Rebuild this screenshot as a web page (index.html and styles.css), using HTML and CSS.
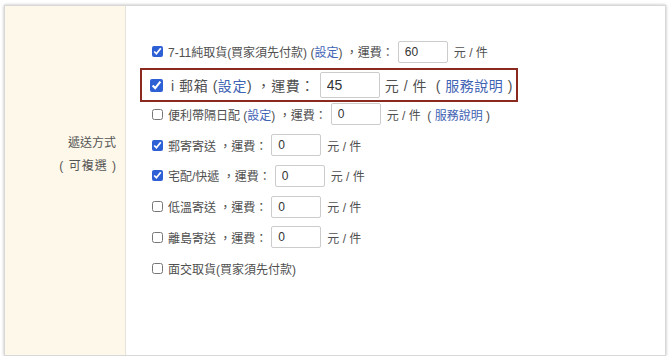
FILE: index.html
```html
<!DOCTYPE html>
<html lang="zh-Hant">
<head>
<meta charset="utf-8">
<link rel="stylesheet" href="styles.css">
</head>
<body>
<div class="frame">
  <div class="label-col">
    <div class="label-line">遞送方式</div>
    <div class="label-line">( 可複選 )</div>
  </div>
  <div class="content">
    <div class="row r1">
      <input type="checkbox" class="cb" checked>
      <span class="txt">7-11純取貨(買家須先付款) (<a class="link">設定</a>) ，運費：</span>
      <input type="text" class="fee" value="60">
      <span class="unit">元 / 件</span>
    </div>
    <div class="row big">
      <input type="checkbox" class="cb cb-big" checked>
      <span class="txt">i 郵箱 (<a class="link">設定</a>) ，運費：</span>
      <input type="text" class="fee fee-big" value="45">
      <span class="unit">元 / 件 &nbsp;( <a class="link">服務說明</a> )</span>
    </div>
    <div class="row r3">
      <input type="checkbox" class="cb">
      <span class="txt">便利帶隔日配 (<a class="link">設定</a>) ，運費：</span>
      <input type="text" class="fee" value="0">
      <span class="unit">元 / 件 &nbsp;( <a class="link">服務說明</a> )</span>
    </div>
    <div class="row r4">
      <input type="checkbox" class="cb" checked>
      <span class="txt">郵寄寄送 ，運費：</span>
      <input type="text" class="fee" value="0">
      <span class="unit">元 / 件</span>
    </div>
    <div class="row rn">
      <input type="checkbox" class="cb" checked>
      <span class="txt">宅配/快遞 ，運費：</span>
      <input type="text" class="fee" value="0">
      <span class="unit">元 / 件</span>
    </div>
    <div class="row rn">
      <input type="checkbox" class="cb">
      <span class="txt">低溫寄送 ，運費：</span>
      <input type="text" class="fee" value="0">
      <span class="unit">元 / 件</span>
    </div>
    <div class="row rn">
      <input type="checkbox" class="cb">
      <span class="txt">離島寄送 ，運費：</span>
      <input type="text" class="fee" value="0">
      <span class="unit">元 / 件</span>
    </div>
    <div class="row rn">
      <input type="checkbox" class="cb">
      <span class="txt">面交取貨(買家須先付款)</span>
    </div>
  </div>
</div>
</body>
</html>
```

FILE: styles.css
```css
html, body {
  margin: 0;
  padding: 0;
  background: #ffffff;
}
body {
  font-family: "Liberation Sans", "Noto Sans CJK TC", sans-serif;
  font-size: 12px;
  color: #505050;
}
.frame {
  margin: 5px 4px 0 4px;
  height: 349px;
  border: 1px solid #d8d8d8;
  box-shadow: 0 0 3px rgba(0, 0, 0, 0.28);
  display: flex;
  background: #ffffff;
}
.label-col {
  width: 121px;
  flex: none;
  background: #fdf8ea;
  border-right: 1px solid #e6e3da;
  padding: 126px 9px 0 0;
  box-sizing: border-box;
  text-align: right;
}
.label-line {
  line-height: 23px;
  font-size: 12px;
  color: #555555;
}
.label-line + .label-line {
  letter-spacing: 1px;
  margin-right: -1px;
}
.content {
  flex: 1;
  padding: 34px 0 0 26px;
  display: flex;
  flex-direction: column;
  align-items: flex-start;
}
.row {
  display: flex;
  align-items: center;
  height: 22px;
  white-space: nowrap;
}
.r1 { height: 23px; }
.big {
  margin: 5px 0 0 -12px;
  border: 2px solid #8a2a1e;
  height: 30px;
  padding: 0 3px 0 8px;
  font-size: 14px;
}
.big .txt {
  letter-spacing: 0.55px;
}
.r3 { margin-top: 1px; }
.r4 { margin-top: 9px; }
.rn { margin-top: 8.75px; }
.cb {
  margin: 0 5px 0 0;
  width: 11px;
  height: 11px;
  accent-color: #2d5fd5;
}
.cb-big {
  width: 13px;
  height: 13px;
  margin-right: 8px;
}
.link {
  color: #3f63b4;
  text-decoration: none;
}
.fee {
  box-sizing: border-box;
  width: 50px;
  height: 22px;
  margin: 0 6px 0 4px;
  padding: 0 6px;
  border: 1px solid #cccccc;
  border-radius: 2px;
  font-family: "Liberation Sans", sans-serif;
  font-size: 12px;
  color: #333333;
  outline: none;
}
.fee-big {
  width: 60px;
  height: 26px;
  font-size: 14px;
  margin-left: 5px;
  margin-right: 5px;
}
.big .unit {
  letter-spacing: 0.5px;
}
```
